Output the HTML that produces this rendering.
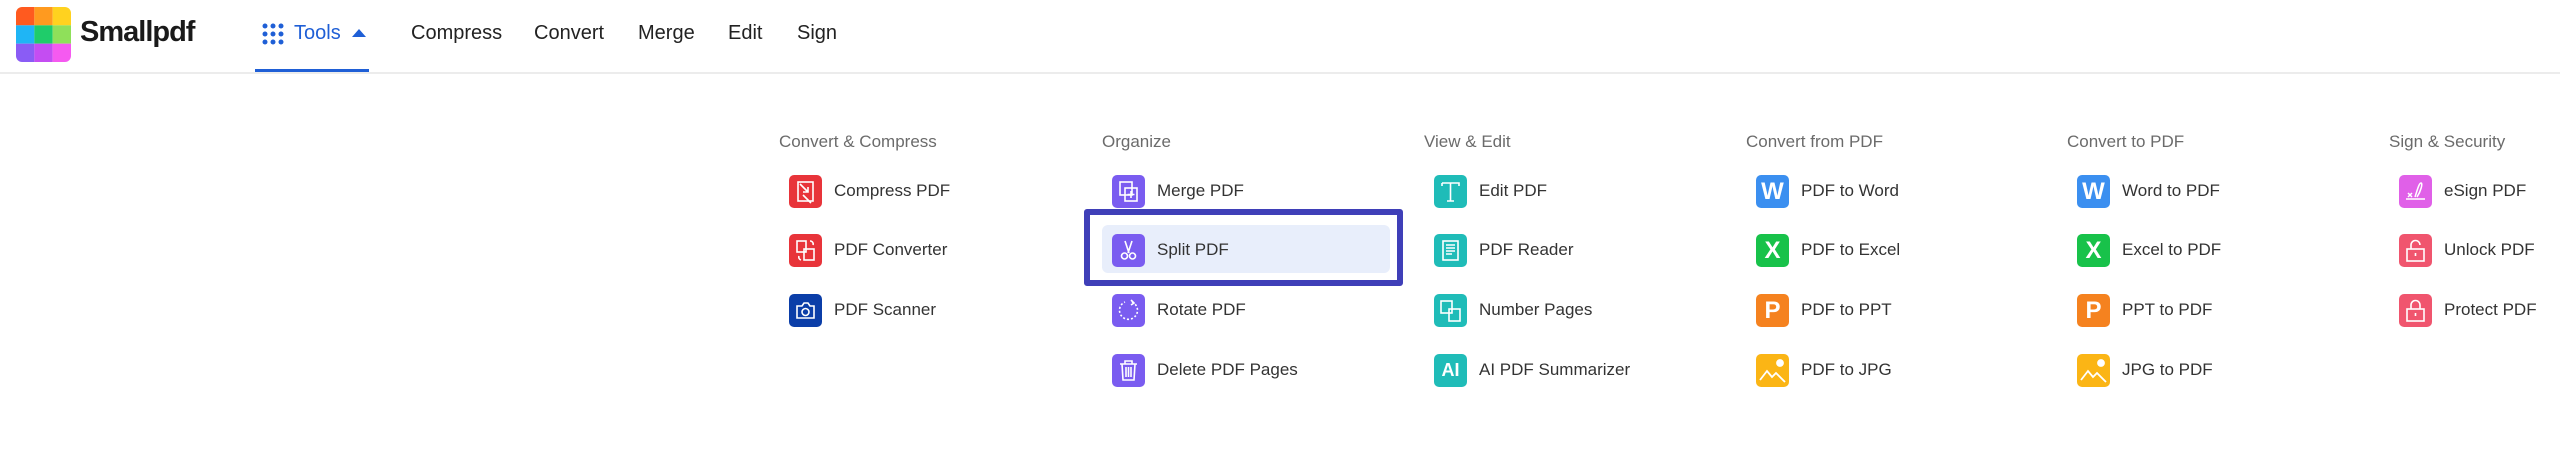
<!DOCTYPE html>
<html><head><meta charset="utf-8"><style>
body{margin:0;width:2560px;height:449px;background:#fff;position:relative;overflow:hidden;font-family:"Liberation Sans",sans-serif;}
.a{position:absolute;white-space:nowrap}
.nav{top:22px;font-size:20px;color:#222}
.hd{font-size:17px;color:#6b6b6b;top:132px}
.ic{position:absolute;width:33px;height:33px;border-radius:5px;color:#fff;font-weight:bold;font-size:24px;text-align:center;line-height:33px}
.ic svg{position:absolute;left:0;top:0}
.it{position:absolute;font-size:17px;color:#333;white-space:nowrap}
</style></head><body>
<!-- logo -->
<svg class="a" style="left:16px;top:7px" width="55" height="55" viewBox="0 0 54 54">
<defs><clipPath id="c"><rect width="54" height="54" rx="6"/></clipPath></defs>
<g clip-path="url(#c)">
<rect x="0" y="0" width="18" height="18" fill="#ff5a1f"/><rect x="18" y="0" width="18" height="18" fill="#ff9a1f"/><rect x="36" y="0" width="18" height="18" fill="#ffd21f"/>
<rect x="0" y="18" width="18" height="18" fill="#1fb5f5"/><rect x="18" y="18" width="18" height="18" fill="#1fcc6a"/><rect x="36" y="18" width="18" height="18" fill="#8fe05a"/>
<rect x="0" y="36" width="18" height="18" fill="#8a5cf5"/><rect x="18" y="36" width="18" height="18" fill="#c44df2"/><rect x="36" y="36" width="18" height="18" fill="#f55af0"/>
</g></svg>
<div class="a" style="left:80px;top:16px;font-size:29px;font-weight:bold;color:#1a1a1a;letter-spacing:-1px">Smallpdf</div>
<svg class="a" style="left:262px;top:23px" width="22" height="22" viewBox="0 0 22 22" fill="#1f5fd6">
<circle cx="3" cy="3" r="2.5"/><circle cx="11" cy="3" r="2.5"/><circle cx="19" cy="3" r="2.5"/>
<circle cx="3" cy="11" r="2.5"/><circle cx="11" cy="11" r="2.5"/><circle cx="19" cy="11" r="2.5"/>
<circle cx="3" cy="19" r="2.5"/><circle cx="11" cy="19" r="2.5"/><circle cx="19" cy="19" r="2.5"/></svg>
<div class="a nav" style="left:294px;color:#1f5fd6">Tools</div>
<svg class="a" style="left:352px;top:29px" width="14" height="9"><path d="M0 8L7 0L14 8Z" fill="#1f5fd6"/></svg>
<div class="a" style="left:255px;top:69px;width:114px;height:3px;background:#1f5fd6"></div>
<div class="a" style="left:0;top:72px;width:2560px;height:2px;background:#ececec"></div>
<div class="a nav" style="left:411px">Compress</div>
<div class="a nav" style="left:534px">Convert</div>
<div class="a nav" style="left:638px">Merge</div>
<div class="a nav" style="left:728px">Edit</div>
<div class="a nav" style="left:797px">Sign</div>

<!-- highlight -->
<div class="a" style="left:1084px;top:209px;width:307px;height:65px;border:6px solid #3f3fb8;border-radius:3px"></div>
<div class="a" style="left:1102px;top:225px;width:288px;height:48px;background:#e8eefb;border-radius:6px"></div>

<!-- headers -->
<div class="a hd" style="left:779px">Convert &amp; Compress</div>
<div class="a hd" style="left:1102px">Organize</div>
<div class="a hd" style="left:1424px">View &amp; Edit</div>
<div class="a hd" style="left:1746px">Convert from PDF</div>
<div class="a hd" style="left:2067px">Convert to PDF</div>
<div class="a hd" style="left:2389px">Sign &amp; Security</div>

<!-- col1 -->
<div class="ic" style="left:789px;top:175px;background:#e8343a"><svg width="33" height="33" fill="none" stroke="#fff" stroke-width="1.6"><rect x="9" y="7" width="15" height="19"/><path d="M11 9l8 8M19 12v5h-5M14 20l8 8"/></svg></div>
<div class="it" style="left:834px;top:181px">Compress PDF</div>
<div class="ic" style="left:789px;top:234px;background:#e8343a"><svg width="33" height="33" fill="none" stroke="#fff" stroke-width="1.6"><rect x="8" y="7" width="9" height="11"/><rect x="15" y="15" width="10" height="11"/><path d="M21 7a3 3 0 0 1 3 4M10 22a3 3 0 0 0 2 4"/></svg></div>
<div class="it" style="left:834px;top:240px">PDF Converter</div>
<div class="ic" style="left:789px;top:294px;background:#0b3ea8"><svg width="33" height="33" fill="none" stroke="#fff" stroke-width="1.6"><path d="M8 12h5l2-3h4l2 3h4v12H8z"/><circle cx="16.5" cy="18" r="3.5"/></svg></div>
<div class="it" style="left:834px;top:300px">PDF Scanner</div>

<!-- col2 -->
<div class="ic" style="left:1112px;top:175px;background:#7a5cf0"><svg width="33" height="33" fill="none" stroke="#fff" stroke-width="1.6"><rect x="8" y="7" width="12" height="13"/><rect x="13" y="13" width="12" height="13"/><path d="M19 16v7M15.5 19.5h7"/></svg></div>
<div class="it" style="left:1157px;top:181px">Merge PDF</div>
<div class="ic" style="left:1112px;top:234px;background:#7a5cf0"><svg width="33" height="33" fill="none" stroke="#fff" stroke-width="1.6"><path d="M13 7l4 12M20 7l-4 12"/><circle cx="12.5" cy="22" r="3"/><circle cx="20.5" cy="22" r="3"/></svg></div>
<div class="it" style="left:1157px;top:240px">Split PDF</div>
<div class="ic" style="left:1112px;top:294px;background:#7a5cf0"><svg width="33" height="33" fill="none" stroke="#fff" stroke-width="1.6"><path d="M20 8a9 9 0 1 1-7 0" stroke-dasharray="2 2"/><path d="M19 6l3 3-3 2"/></svg></div>
<div class="it" style="left:1157px;top:300px">Rotate PDF</div>
<div class="ic" style="left:1112px;top:354px;background:#7a5cf0"><svg width="33" height="33" fill="none" stroke="#fff" stroke-width="1.6"><path d="M8 10h17M13 10V7h7v3M10 10l1 16h11l1-16M14 13v10M16.5 13v10M19 13v10"/></svg></div>
<div class="it" style="left:1157px;top:360px">Delete PDF Pages</div>

<!-- col3 -->
<div class="ic" style="left:1434px;top:175px;background:#1fbcb8"><svg width="33" height="33" fill="none" stroke="#fff" stroke-width="1.6"><path d="M8 8h17v3M8 8v3M16.5 8v18M13 26h7"/></svg></div>
<div class="it" style="left:1479px;top:181px">Edit PDF</div>
<div class="ic" style="left:1434px;top:234px;background:#1fbcb8"><svg width="33" height="33" fill="none" stroke="#fff" stroke-width="1.6"><rect x="9" y="7" width="15" height="19"/><path d="M12 11h9M12 14h9M12 17h9M12 20h6"/></svg></div>
<div class="it" style="left:1479px;top:240px">PDF Reader</div>
<div class="ic" style="left:1434px;top:294px;background:#1fbcb8"><svg width="33" height="33" fill="none" stroke="#fff" stroke-width="1.6"><rect x="7" y="7" width="11" height="12"/><rect x="15" y="15" width="11" height="12"/></svg></div>
<div class="it" style="left:1479px;top:300px">Number Pages</div>
<div class="ic" style="left:1434px;top:354px;background:#1fbcb8;font-size:18px">AI</div>
<div class="it" style="left:1479px;top:360px">AI PDF Summarizer</div>

<!-- col4 -->
<div class="ic" style="left:1756px;top:175px;background:#3b8ff0">W</div>
<div class="it" style="left:1801px;top:181px">PDF to Word</div>
<div class="ic" style="left:1756px;top:234px;background:#18c24a">X</div>
<div class="it" style="left:1801px;top:240px">PDF to Excel</div>
<div class="ic" style="left:1756px;top:294px;background:#f5821f">P</div>
<div class="it" style="left:1801px;top:300px">PDF to PPT</div>
<div class="ic" style="left:1756px;top:354px;background:#fbb515"><svg width="33" height="33" fill="none" stroke="#fff" stroke-width="1.8"><path d="M4 26l7-9 5 6 4-4 9 9"/><circle cx="24" cy="9" r="3" fill="#fff"/></svg></div>
<div class="it" style="left:1801px;top:360px">PDF to JPG</div>

<!-- col5 -->
<div class="ic" style="left:2077px;top:175px;background:#3b8ff0">W</div>
<div class="it" style="left:2122px;top:181px">Word to PDF</div>
<div class="ic" style="left:2077px;top:234px;background:#18c24a">X</div>
<div class="it" style="left:2122px;top:240px">Excel to PDF</div>
<div class="ic" style="left:2077px;top:294px;background:#f5821f">P</div>
<div class="it" style="left:2122px;top:300px">PPT to PDF</div>
<div class="ic" style="left:2077px;top:354px;background:#fbb515"><svg width="33" height="33" fill="none" stroke="#fff" stroke-width="1.8"><path d="M4 26l7-9 5 6 4-4 9 9"/><circle cx="24" cy="9" r="3" fill="#fff"/></svg></div>
<div class="it" style="left:2122px;top:360px">JPG to PDF</div>

<!-- col6 -->
<div class="ic" style="left:2399px;top:175px;background:#e060e8"><svg width="33" height="33" fill="none" stroke="#fff" stroke-width="1.5"><path d="M7 24h19M9 18l4 4M13 18l-4 4M16 22c2-6 4-14 6-14s0 8-4 14"/></svg></div>
<div class="it" style="left:2444px;top:181px">eSign PDF</div>
<div class="ic" style="left:2399px;top:234px;background:#f0556e"><svg width="33" height="33" fill="none" stroke="#fff" stroke-width="1.6"><rect x="8" y="15" width="17" height="12"/><path d="M12 15v-4a4.5 4.5 0 0 1 9 0"/><path d="M16.5 19v3"/></svg></div>
<div class="it" style="left:2444px;top:240px">Unlock PDF</div>
<div class="ic" style="left:2399px;top:294px;background:#f0556e"><svg width="33" height="33" fill="none" stroke="#fff" stroke-width="1.6"><rect x="8" y="15" width="17" height="12"/><path d="M12 15v-4a4.5 4.5 0 0 1 9 0v4"/><path d="M16.5 19v3"/></svg></div>
<div class="it" style="left:2444px;top:300px">Protect PDF</div>
</body></html>
